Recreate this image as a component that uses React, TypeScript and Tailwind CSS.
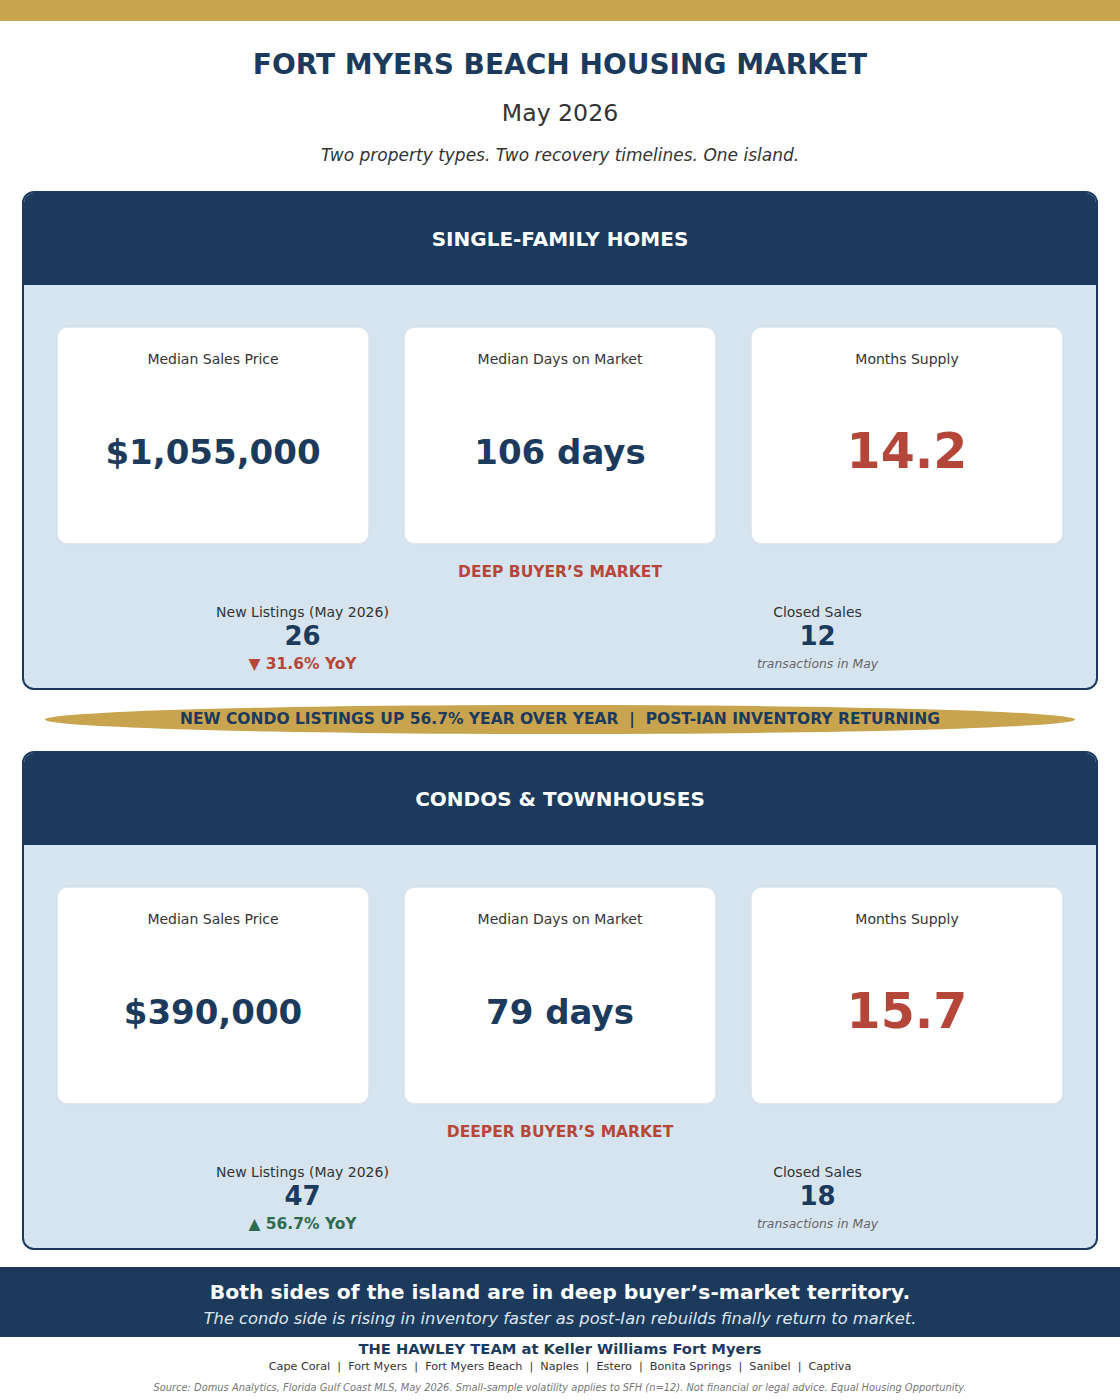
import React from "react";

type Section = {
  title: string;
  price: string;
  dom: string;
  supply: string;
  verdict: string;
  listings: string;
  yoy: string;
  up: boolean;
  closed: string;
};

const sections: Section[] = [
  {
    title: "SINGLE-FAMILY HOMES",
    price: "$1,055,000",
    dom: "106 days",
    supply: "14.2",
    verdict: "DEEP BUYER\u2019S MARKET",
    listings: "26",
    yoy: "31.6% YoY",
    up: false,
    closed: "12",
  },
  {
    title: "CONDOS & TOWNHOUSES",
    price: "$390,000",
    dom: "79 days",
    supply: "15.7",
    verdict: "DEEPER BUYER\u2019S MARKET",
    listings: "47",
    yoy: "56.7% YoY",
    up: true,
    closed: "18",
  },
];

function Card({ label, value, red }: { label: string; value: string; red?: boolean }) {
  return (
    <div className="flex h-[217px] flex-col rounded-[10px] border border-[#e3e8ee] bg-white pb-[10px] pt-[20px] shadow-[0_0_2px_rgba(0,0,0,0.06)]">
      <div className="text-center text-[14px] leading-[22px] text-[#333333]">{label}</div>
      <div className="flex flex-1 items-center justify-center">
        {red ? (
          <span className="text-[49px] font-bold leading-none text-[#b5473a]">{value}</span>
        ) : (
          <span className="text-[34px] font-bold leading-none text-[#1b3a5c]">{value}</span>
        )}
      </div>
    </div>
  );
}

function Panel({ s }: { s: Section }) {
  return (
    <div className="mx-[22px] overflow-hidden rounded-[12px] border-2 border-[#1b3a5c] bg-[#d6e4f0]">
      <div className="flex h-[92px] items-center justify-center bg-[#1b3a5c] text-[20px] font-bold text-white">
        {s.title}
      </div>
      <div className="px-[33px] pb-[14px] pt-[42px]">
        <div className="grid grid-cols-3 gap-[35px]">
          <Card label="Median Sales Price" value={s.price} />
          <Card label="Median Days on Market" value={s.dom} />
          <Card label="Months Supply" value={s.supply} red />
        </div>
        <div className="mt-[18px] text-center text-[15.5px] font-bold leading-[20px] text-[#b5473a]">
          {s.verdict}
        </div>
        <div className="-mx-[12px] mt-[21px] grid grid-cols-2">
          <div className="flex flex-col items-center">
            <div className="text-[14px] leading-[18px] text-[#333333]">New Listings (May 2026)</div>
            <div className="text-[26px] font-bold leading-[30px] text-[#1b3a5c]">{s.listings}</div>
            {s.up ? (
              <div className="mt-[3px] text-[15.5px] font-bold leading-[20px] text-[#2e6b4f]">
                {"\u25B2 "}
                {s.yoy}
              </div>
            ) : (
              <div className="mt-[3px] text-[15.5px] font-bold leading-[20px] text-[#b5473a]">
                {"\u25BC "}
                {s.yoy}
              </div>
            )}
          </div>
          <div className="flex flex-col items-center">
            <div className="text-[14px] leading-[18px] text-[#333333]">Closed Sales</div>
            <div className="text-[26px] font-bold leading-[30px] text-[#1b3a5c]">{s.closed}</div>
            <div className="mt-[3px] text-[12.4px] italic leading-[20px] text-[#666666]">transactions in May</div>
          </div>
        </div>
      </div>
    </div>
  );
}

export default function App() {
  return (
    <div className="w-[1120px] bg-white pb-[4px] font-['DejaVu_Sans',sans-serif]">
      <div className="h-[21px] bg-[#c9a44e]" />
      <h1 className="mt-[29px] text-center text-[28px] font-bold leading-[30px] text-[#1b3a5c]">
        FORT MYERS BEACH HOUSING MARKET
      </h1>
      <div className="mt-[20px] text-center text-[23.6px] leading-[26px] text-[#333333]">May 2026</div>
      <div className="mt-[19px] text-center text-[17px] italic leading-[20px] text-[#333333]">
        Two property types. Two recovery timelines. One island.
      </div>
      <div className="mt-[26px]">
        <Panel s={sections[0]} />
      </div>
      <div className="mx-[45px] mt-[15px] flex h-[29px] items-center justify-center rounded-[50%] bg-[#c9a44e] text-[15.5px] font-bold text-[#1b3a5c]">
        NEW CONDO LISTINGS UP 56.7% YEAR OVER YEAR&nbsp;&nbsp;|&nbsp;&nbsp;POST-IAN INVENTORY RETURNING
      </div>
      <div className="mt-[17px]">
        <Panel s={sections[1]} />
      </div>
      <div className="mt-[17px] bg-[#1b3a5c] pb-[8px] pt-[13px] text-center">
        <div className="text-[20.3px] font-bold leading-[24px] text-white">
          Both sides of the island are in deep buyer’s-market territory.
        </div>
        <div className="mt-[5px] text-[16.3px] italic leading-[20px] text-[#dbe6f0]">
          The condo side is rising in inventory faster as post-Ian rebuilds finally return to market.
        </div>
      </div>
      <div className="mt-[3px] text-center text-[14.7px] font-bold leading-[18px] text-[#1b3a5c]">
        THE HAWLEY TEAM at Keller Williams Fort Myers
      </div>
      <div className="mt-[1px] text-center text-[11.2px] leading-[16px] text-[#333333]">
        Cape Coral&nbsp;&nbsp;|&nbsp;&nbsp;Fort Myers&nbsp;&nbsp;|&nbsp;&nbsp;Fort Myers Beach&nbsp;&nbsp;|&nbsp;&nbsp;Naples&nbsp;&nbsp;|&nbsp;&nbsp;Estero&nbsp;&nbsp;|&nbsp;&nbsp;Bonita Springs&nbsp;&nbsp;|&nbsp;&nbsp;Sanibel&nbsp;&nbsp;|&nbsp;&nbsp;Captiva
      </div>
      <div className="mt-[6px] text-center text-[9.9px] italic leading-[14px] text-[#777777]">
        Source: Domus Analytics, Florida Gulf Coast MLS, May 2026. Small-sample volatility applies to SFH (n=12). Not financial or legal advice. Equal Housing Opportunity.
      </div>
    </div>
  );
}
